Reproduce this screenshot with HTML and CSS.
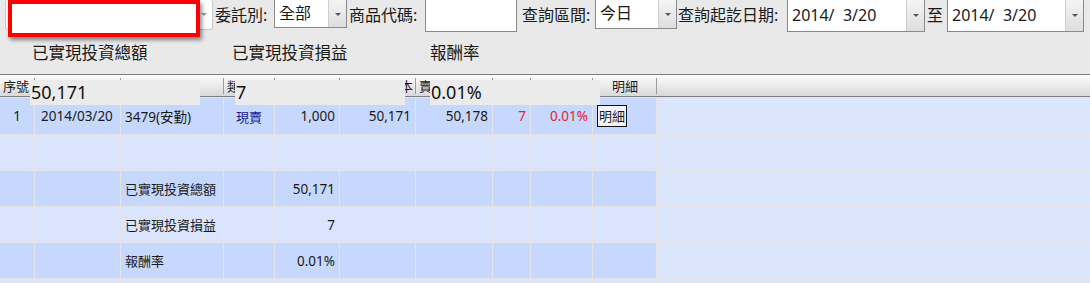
FILE: index.html
```html
<!DOCTYPE html>
<html lang="zh-Hant">

<head>
    <meta charset="UTF-8">
    <meta name="viewport" content="width=device-width, initial-scale=1.0">
    <title>已實現損益查詢</title>
    <link rel="stylesheet" href="styles.css">
</head>

<body>
    <div class="page">
        <div class="toolbar">
            <div class="combo combo-account disabled">
                <span class="combo-text"></span>
                <span class="combo-btn"></span>
            </div>
            <span class="label label-type">委託別:</span>
            <div class="combo combo-type">
                <span class="combo-text">全部</span>
                <span class="combo-btn"></span>
            </div>
            <span class="label label-code">商品代碼:</span>
            <input class="textbox" type="text">
            <span class="label label-range">查詢區間:</span>
            <div class="combo combo-range">
                <span class="combo-text">今日</span>
                <span class="combo-btn"></span>
            </div>
            <span class="label label-date">查詢起訖日期:</span>
            <div class="combo combo-date">
                <span class="combo-text">2014/  3/20</span>
                <span class="combo-btn"></span>
            </div>
            <span class="label label-to">至</span>
            <div class="combo combo-date combo-date-end">
                <span class="combo-text">2014/  3/20</span>
                <span class="combo-btn"></span>
            </div>
        </div>

        <!-- annotation over the account box -->
        <div class="highlight"></div>

        <div class="summary-titles">
            <span class="summary-title">已實現投資總額</span>
            <span class="summary-title">已實現投資損益</span>
            <span class="summary-title">報酬率</span>
        </div>

        <table class="grid">
            <colgroup>
                <col style="width: 35px">
                <col style="width: 86px">
                <col style="width: 103px">
                <col style="width: 51px">
                <col style="width: 65px">
                <col style="width: 76px">
                <col style="width: 77px">
                <col style="width: 38px">
                <col style="width: 62px">
                <col style="width: 64px">
                <col>
            </colgroup>
            <thead>
                <tr>
                    <th class="left">序號</th>
                    <th>成交日期</th>
                    <th>商品名稱</th>
                    <th class="left">類別</th>
                    <th>股數</th>
                    <th class="right">成本</th>
                    <th class="left">賣出金額</th>
                    <th>損益</th>
                    <th>報酬率</th>
                    <th>明細</th>
                    <th class="filler"></th>
                </tr>
            </thead>
            <tbody>
                <tr class="row-dark row-first">
                    <td class="center">1</td>
                    <td class="date">2014/03/20</td>
                    <td>3479(安勤)</td>
                    <td class="center kind">現賣</td>
                    <td class="num">1,000</td>
                    <td class="num">50,171</td>
                    <td class="num">50,178</td>
                    <td class="num loss">7</td>
                    <td class="num loss">0.01%</td>
                    <td><span class="detail-btn">明細</span></td>
                    <td class="filler"></td>
                </tr>
                <tr class="row-light">
                    <td></td><td></td><td></td><td></td><td></td><td></td><td></td><td></td><td></td><td></td>
                    <td class="filler"></td>
                </tr>
                <tr class="row-dark">
                    <td></td><td></td>
                    <td class="cjk">已實現投資總額</td>
                    <td></td>
                    <td class="num">50,171</td>
                    <td></td><td></td><td></td><td></td><td></td>
                    <td class="filler"></td>
                </tr>
                <tr class="row-light">
                    <td></td><td></td>
                    <td class="cjk">已實現投資損益</td>
                    <td></td>
                    <td class="num">7</td>
                    <td></td><td></td><td></td><td></td><td></td>
                    <td class="filler"></td>
                </tr>
                <tr class="row-dark">
                    <td></td><td></td>
                    <td class="cjk">報酬率</td>
                    <td></td>
                    <td class="num">0.01%</td>
                    <td></td><td></td><td></td><td></td><td></td>
                    <td class="filler"></td>
                </tr>
                <tr class="row-light">
                    <td></td><td></td><td></td><td></td><td></td><td></td><td></td><td></td><td></td><td></td>
                    <td class="filler"></td>
                </tr>
            </tbody>
        </table>

        <!-- value labels that spill over the grid header -->
        <div class="summary-values">
            <span class="summary-value">50,171</span>
            <span class="summary-value">7</span>
            <span class="summary-value">0.01%</span>
        </div>
    </div>
</body>

</html>
```

FILE: styles.css
```css
body {
    margin: 0;
    background-color: #e9e9e9;
    font-family: "Noto Sans", "Noto Sans CJK TC", sans-serif;
    color: #1a1a1a;
    overflow: hidden;
}

.page {
    position: relative;
    width: 1090px;
    height: 283px;
    overflow: hidden;
}

/* toolbar */

.toolbar {
    display: flex;
    align-items: flex-start;
    height: 40px;
    font-size: 16px;
}

.label {
    box-sizing: border-box;
    line-height: 30px;
    padding-left: 2px;
    white-space: nowrap;
}

.label-type { width: 61px; }
.label-code { width: 78px; }
.label-range { width: 78px; padding-left: 5px; }
.label-date { width: 110px; padding-left: 1px; }
.label-to { width: 22px; }

.combo {
    box-sizing: border-box;
    display: flex;
    background-color: #fff;
    border: 1px solid #8a8a8a;
    border-top: none;
    height: 29px;
}

.combo-text {
    flex: 1;
    padding-left: 4px;
    line-height: 26px;
    white-space: pre;
}

.combo-btn {
    position: relative;
    width: 17px;
    background: linear-gradient(#f4f4f4, #dedede);
    border-left: 1px solid #cfcfcf;
}

.combo-btn::after {
    content: "";
    position: absolute;
    left: 6px;
    top: 13px;
    border-left: 3px solid transparent;
    border-right: 3px solid transparent;
    border-top: 3px solid #555;
}

.combo-account {
    margin-left: 5px;
    width: 208px;
    height: 30px;
    border-color: #c9c9c9;
    border-radius: 3px;
}

.combo-account .combo-btn {
    background: none;
    border-left: none;
}

.combo-account .combo-btn::after {
    border-top-color: #9a9a9a;
}

.combo-type { width: 73px; height: 28px; }
.combo-range { width: 82px; }
.combo-date { width: 138px; height: 32px; }
.combo-date .combo-text { line-height: 30px; }
.combo-date .combo-btn::after { top: 14px; }
.combo-date-end { width: 137px; }

.textbox {
    box-sizing: border-box;
    width: 92px;
    height: 32px;
    margin: 0;
    border: 1px solid #8a8a8a;
    border-top: none;
    background-color: #fff;
}

.highlight {
    position: absolute;
    left: 8px;
    top: 0;
    width: 192px;
    height: 37px;
    box-sizing: border-box;
    border: 4px solid #ff0000;
    background-color: #fff;
    box-shadow: 2px 3px 4px rgba(0, 0, 0, 0.45);
}

/* summary */

.summary-titles {
    display: flex;
    height: 34px;
    padding-left: 32px;
    font-size: 16.5px;
    line-height: 26px;
}

.summary-title {
    width: 200px;
    white-space: nowrap;
}

.summary-title:nth-child(2) {
    width: 198px;
}

.summary-values {
    position: absolute;
    left: 30px;
    top: 80px;
    display: flex;
    gap: 35px;
}

.summary-value {
    box-sizing: border-box;
    width: 170px;
    height: 25px;
    padding-left: 1px;
    background-color: #ebebeb;
    font-size: 18px;
    line-height: 25px;
    color: #111;
}

.summary-value:nth-child(2) {
    margin-right: -10px;
}

/* grid */

.grid {
    width: 1090px;
    table-layout: fixed;
    border-collapse: separate;
    border-spacing: 0;
    font-size: 13.5px;
    background-color: #dbe5fc;
}

.grid th {
    height: 21px;
    padding: 0 3px;
    border-top: 1px solid #7d7d7d;
    border-bottom: 1px solid #7d7d7d;
    background:
        linear-gradient(#9b9b9b, #9b9b9b) right 3px / 1px 16px no-repeat,
        linear-gradient(#fdfdfd, #d9d9d9);
    font-size: 13px;
    font-weight: normal;
    white-space: nowrap;
    overflow: hidden;
}

.grid th.left { text-align: left; }
.grid th.right { text-align: right; }

.grid th.filler {
    background: linear-gradient(#fdfdfd, #d9d9d9);
}

.grid td {
    height: 35px;
    padding: 0 4px;
    border-right: 1px solid #e4e4e4;
    border-bottom: 1px solid #e4e4e4;
    white-space: nowrap;
    overflow: hidden;
}

.row-first td {
    height: 36px;
    border-top: 1px solid #e4e4e4;
}

.row-dark td { background-color: #c6d8fe; }
.row-light td { background-color: #dae4fc; }
.grid td.filler { background-color: #dbe5fc; border-right: none; }

.grid td.center { text-align: center; }
.grid td.date { padding-left: 6px; }
.grid td.num { text-align: right; }
.grid td.cjk { font-size: 13px; }
.grid td.kind { color: #1c1c96; font-size: 13px; }
.grid td.loss { color: #e8202a; }

.detail-btn {
    display: inline-block;
    padding: 0 1px;
    font-size: 13px;
    line-height: 20px;
    border: 1px solid #111;
    background-color: #f2f5ff;
}
```
